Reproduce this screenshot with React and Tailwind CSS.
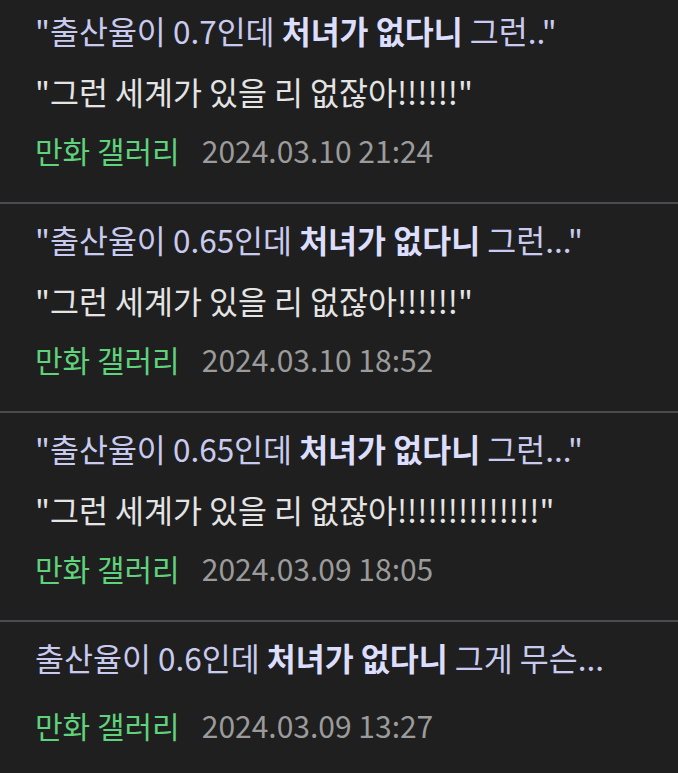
const posts = [
  { pre: '"출산율이 0.7인데 ', post: ' 그런.."', reply: '"그런 세계가 있을 리 없잖아!!!!!!"', date: '2024.03.10 21:24' },
  { pre: '"출산율이 0.65인데 ', post: ' 그런..."', reply: '"그런 세계가 있을 리 없잖아!!!!!!"', date: '2024.03.10 18:52' },
  { pre: '"출산율이 0.65인데 ', post: ' 그런..."', reply: '"그런 세계가 있을 리 없잖아!!!!!!!!!!!!!!"', date: '2024.03.09 18:05' },
  { pre: '출산율이 0.6인데 ', post: ' 그게 무슨...', reply: null, date: '2024.03.09 13:27' },
];

const PostRow = ({ post, first, last }) => (
  <div className={`${first ? 'pt-0 pb-[23px]' : 'pt-[5px] pb-[23px]'} ${last ? '' : 'border-b-2 border-[#4b4b4f]'} pl-[35px]`}>
    <div className="h-[61px] leading-[61px] text-[31.5px] text-[#c8cbef] whitespace-nowrap">
      {post.pre}<span className="font-bold text-[#dcdeff]">처녀가 없다니</span>{post.post}
    </div>
    {post.reply && (
      <div className="h-[60px] leading-[60px] text-[31.5px] text-[#e4e4e4] whitespace-nowrap">{post.reply}</div>
    )}
    <div className={`${post.reply ? '' : 'mt-2'} h-[58px] leading-[58px] text-[30px] whitespace-nowrap flex gap-[22px]`}>
      <span className="text-[#5fd27c]">만화 갤러리</span>
      <span className="text-[#9b9b9b]">{post.date}</span>
    </div>
  </div>
);

export default function App() {
  return (
    <div
      className="w-[678px] h-[773px] overflow-hidden bg-[#1f1f1f]"
      style={{ fontFamily: '"Noto Sans CJK KR", "Noto Sans", sans-serif' }}
    >
      {posts.map((p, i) => (
        <PostRow key={i} post={p} first={i === 0} last={i === posts.length - 1} />
      ))}
    </div>
  );
}
